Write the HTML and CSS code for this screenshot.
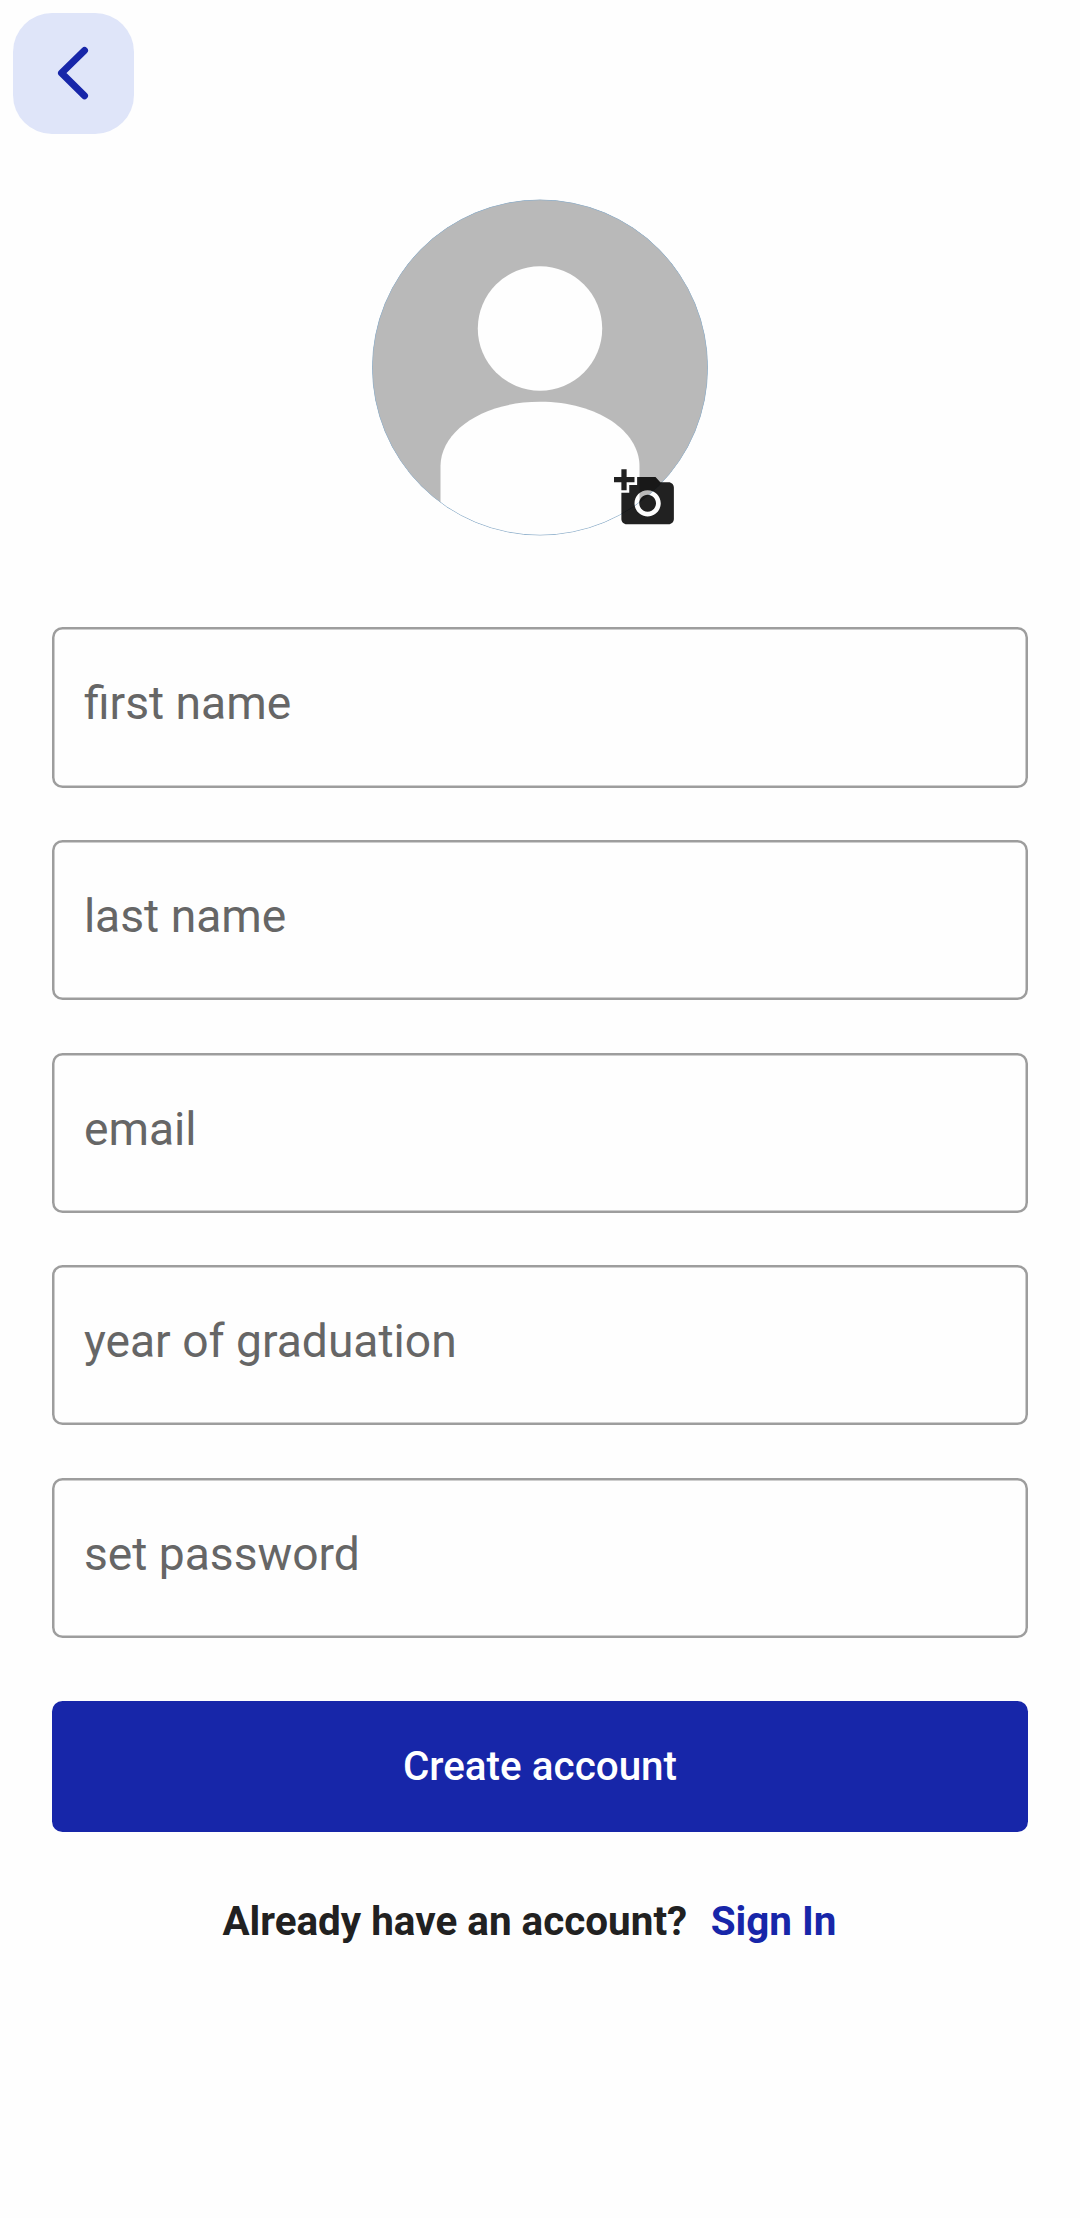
FILE: index.html
```html
<!DOCTYPE html>
<html lang="en">
<head>
<meta charset="utf-8">
<title>Create account</title>
<link rel="stylesheet" href="styles.css">
</head>
<body>
<main class="screen">
  <button class="back" type="button" aria-label="Back">
    <svg class="back-icon" viewBox="0 0 121 121"><path d="M71.5 37.5 48.5 60 71.5 82.7"/></svg>
  </button>
  <div class="avatar">
    <svg class="avatar-image" viewBox="0 0 336 337">
      <defs><clipPath id="round"><circle cx="168" cy="168.500" r="168"/></clipPath></defs>
      <g clip-path="url(#round)">
        <circle class="avatar-back" cx="168" cy="168.500" r="168"/>
        <circle class="avatar-person" cx="168" cy="129.5" r="62.2"/>
        <path class="avatar-person" d="M68.500 337V266.500C69 232.500 110 202.800 168 202.800S267 232.500 267.500 266.500V337Z"/>
        <circle class="avatar-rim" cx="168" cy="168.500" r="167.8"/>
      </g>
    </svg>
    <svg class="camera" viewBox="0 0 24 24"><path d="M3 4V1h2v3h3v2H5v3H3V6H0V4h3zm3 6V7h3V4h7l1.830 2H21c1.100 0 2 .9 2 2v12c0 1.100-.9 2-2 2H5c-1.100 0-2-.9-2-2V10h3zm7 9c2.760 0 5-2.240 5-5s-2.240-5-5-5-5 2.240-5 5 2.240 5 5 5zm-3.200-5c0 1.770 1.430 3.200 3.200 3.200s3.200-1.430 3.200-3.200-1.430-3.200-3.200-3.200-3.200 1.430-3.200 3.200z"/></svg>
  </div>
  <form class="form">
    <input class="field" type="text" placeholder="first name">
    <input class="field" type="text" placeholder="last name">
    <input class="field" type="text" placeholder="email">
    <input class="field" type="text" placeholder="year of graduation">
    <input class="field" type="text" placeholder="set password">
    <button class="submit" type="button">Create account</button>
  </form>
  <p class="signin"><span>Already have an account?</span><a class="signin-link">Sign In</a></p>
</main>
</body>
</html>
```
FILE: styles.css
```css
* { box-sizing: border-box; }

body {
  margin: 0;
  background: #fefefe;
  font-family: Roboto, sans-serif;
}

.screen {
  display: flex;
  flex-direction: column;
  min-height: 2218px;
  padding: 13px 52.400px 0;
}

.back {
  width: 121px;
  height: 121px;
  margin-left: -39.400px;
  padding: 0;
  border: 0;
  border-radius: 39px;
  background: #dfe5f9;
}

.back-icon {
  display: block;
  width: 121px;
  height: 121px;
  fill: none;
  stroke: #1726a9;
  stroke-width: 7;
  stroke-linecap: round;
  stroke-linejoin: round;
}

.avatar {
  position: relative;
  align-self: center;
  width: 336px;
  height: 337px;
  margin-top: 65px;
}

.avatar-image { display: block; width: 336px; height: 337px; }
.avatar-back { fill: #b9b9b9; }
.avatar-person { fill: #fefefe; }
.avatar-rim { fill: none; stroke: #8fb0cc; stroke-width: 1; }

/* The 24-unit glyph sits half a pixel inside its 64px box. */
.camera {
  position: absolute;
  left: 241px;
  top: 267px;
  width: 64px;
  height: 64px;
  padding: 0.5px;
  fill: rgba(0, 0, 0, 0.87);
}

.form {
  display: flex;
  flex-direction: column;
  gap: 52.5px;
  margin-top: 91.400px;
}

.field {
  width: 100%;
  height: 160.125px;
  padding: 0 31.5px 8px;
  border: 0;
  border-radius: 10.5px;
  background: none;
  box-shadow: inset 0 0 0 2.500px #9d9d9d;
  font: 400 46.2px Roboto, sans-serif;
}

.field::placeholder { color: #666; opacity: 1; }

.submit {
  height: 131.25px;
  margin-top: 10.5px;
  padding: 0;
  border: 0;
  border-radius: 10.5px;
  background: #1726a9;
  color: #fff;
  font: 500 40.425px Roboto, sans-serif;
}

.signin {
  display: flex;
  gap: 23.500px;
  margin: 65px 0 0 170px;
  color: #212121;
  font-size: 40.425px;
  font-weight: 700;
  line-height: 50px;
}

.signin-link { color: #1726a9; }
```
